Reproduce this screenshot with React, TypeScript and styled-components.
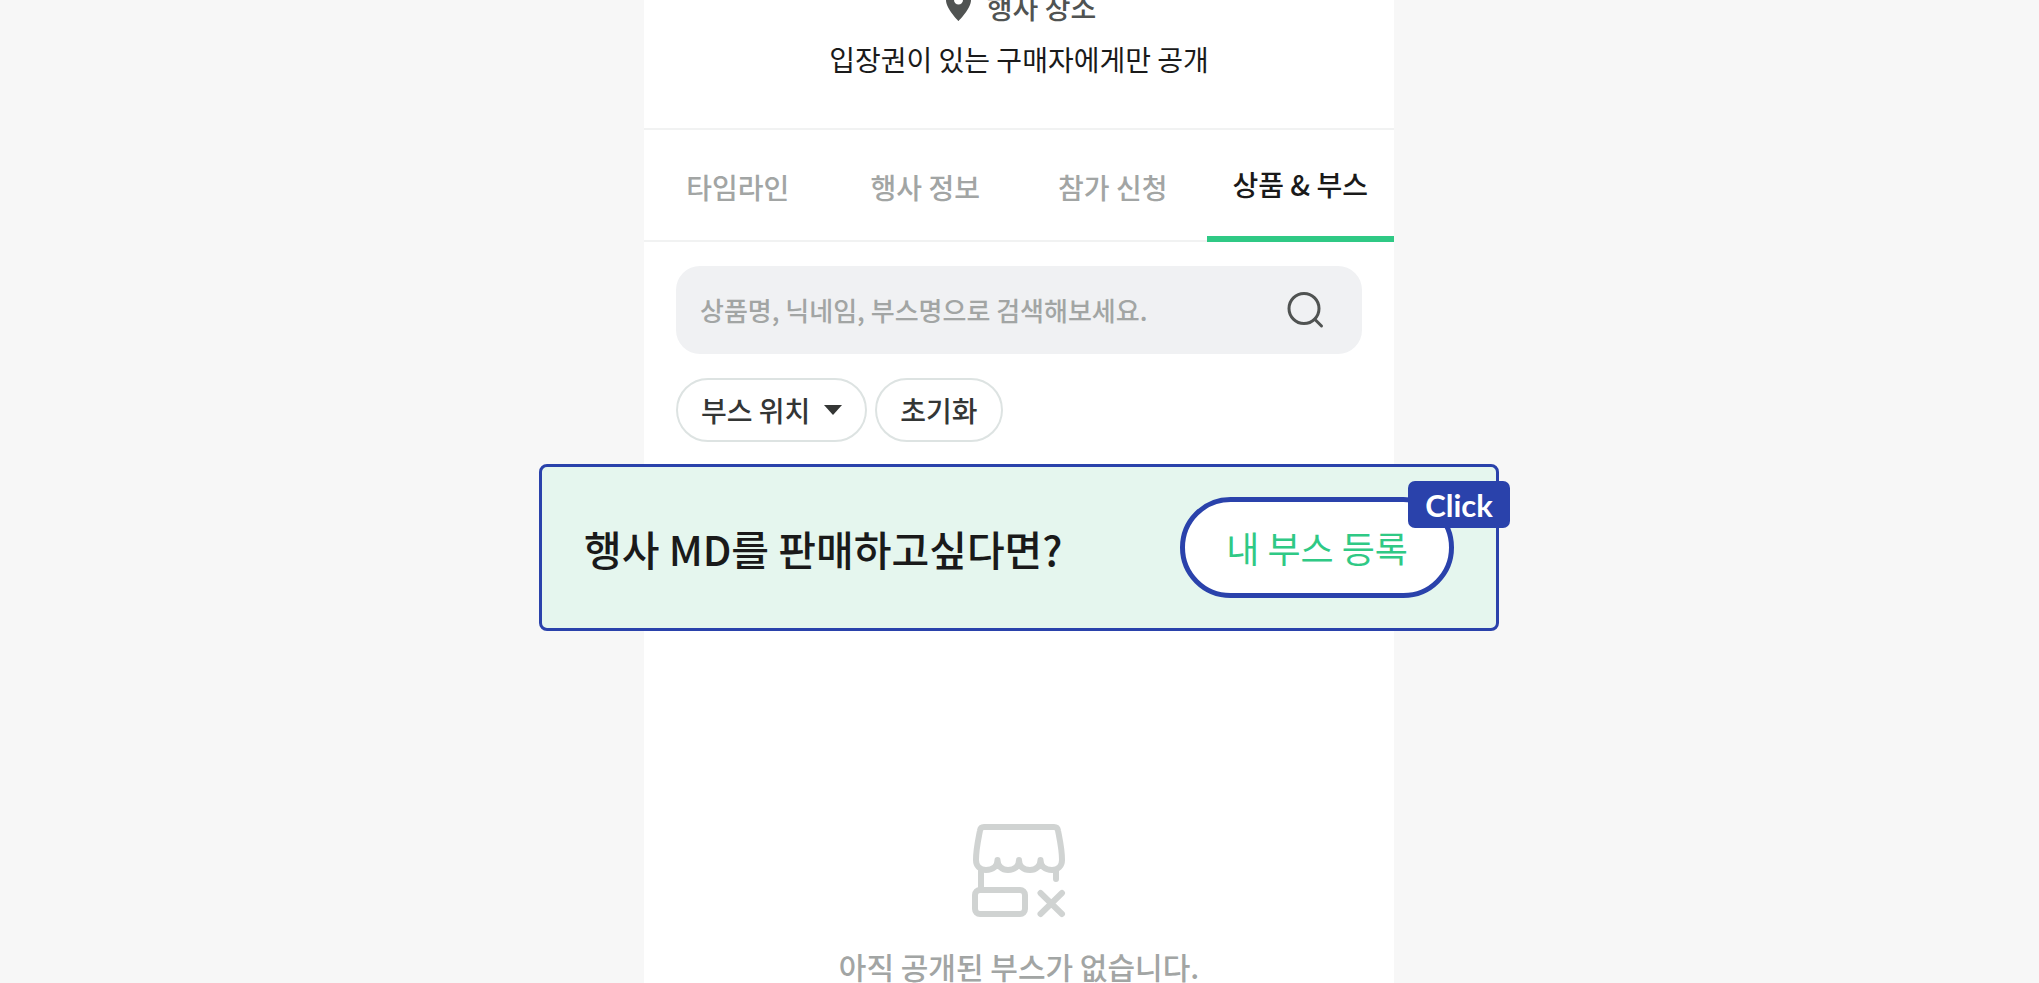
import React from "react";
import styled, { createGlobalStyle, css } from "styled-components";

const GlobalStyle = createGlobalStyle`
  *, *::before, *::after { box-sizing: border-box; }
  html { overflow: hidden; }
  body {
    margin: 0;
    background: #f7f7f7;
    color: #1a1a1a;
    font-family: "Noto Sans CJK KR", "Noto Sans", sans-serif;
  }
  button, input { font: inherit; }
  h1, h2, p { margin: 0; font-weight: inherit; }
`;

const Page = styled.div`
  height: 100vh;
  padding-right: 1px;
  overflow: hidden;
  display: flex;
  flex-direction: column;
  align-items: center;
`;

const Sheet = styled.main`
  flex: 1 0 auto;
  width: 100%;
  max-width: 750px;
  background: #fff;
  display: flex;
  flex-direction: column;
`;

const Venue = styled.header`
  height: 128px;
  padding-bottom: 49px;
  display: flex;
  flex-direction: column;
  align-items: center;
  justify-content: flex-end;
  gap: 12px;
`;

const VenueLabel = styled.h2`
  display: flex;
  align-items: center;
  gap: 16px;
  padding-left: 4px;
  color: #505352;
  font-size: 28px;
  font-weight: 500;
  line-height: 40px;
`;

const VenueNote = styled.p`
  font-size: 28px;
  line-height: 40px;
`;

const TabBar = styled.nav`
  display: grid;
  grid-template-columns: repeat(4, 1fr);
  height: 114px;
  border-top: 2px solid #f1f2f2;
  box-shadow: inset 0 -2px #f1f2f2;
`;

const Tab = styled.button<{ $active?: boolean }>`
  border: 0;
  padding: 2px 0 0;
  background: none;
  color: #a2a5a4;
  font-size: 28px;
  font-weight: 500;
  line-height: 40px;
  white-space: nowrap;
  ${({ $active }) =>
    $active &&
    css`
      color: #1a1a1a;
      border-bottom: 6px solid #2fc985;
    `}
`;

const Filters = styled.section`
  padding: 24px 32px 22px;
  display: flex;
  flex-direction: column;
  gap: 24px;
`;

const SearchBox = styled.form`
  display: flex;
  align-items: center;
  height: 88px;
  padding: 0 32px 0 24px;
  border-radius: 24px;
  background: #f0f1f3;
`;

const SearchInput = styled.input`
  flex: 1;
  min-width: 0;
  border: 0;
  padding: 0;
  outline: 0;
  background: none;
  font-size: 26px;
  font-weight: 500;
  line-height: 40px;
  &::placeholder { color: #a2a5a4; opacity: 1; }
`;

const IconButton = styled.button`
  display: flex;
  border: 0;
  padding: 0;
  background: none;
`;

const ChipRow = styled.div`
  display: flex;
  gap: 8px;
`;

const Chip = styled.button`
  display: flex;
  align-items: center;
  gap: 14px;
  height: 64px;
  padding: 0 23px;
  border: 2px solid #dde3e2;
  border-radius: 32px;
  background: #fff;
  color: #343635;
  font-size: 28px;
  font-weight: 500;
  line-height: 40px;
  white-space: nowrap;
`;

const Banner = styled.section`
  align-self: center;
  position: relative;
  flex: none;
  display: flex;
  align-items: center;
  justify-content: space-between;
  width: 960px;
  max-width: 100vw;
  height: 167px;
  padding: 0 42px;
  border: 3px solid #2a42ab;
  border-radius: 8px;
  background: #e5f6ee;
`;

const BannerTitle = styled.h1`
  font-size: 41px;
  font-weight: 500;
  line-height: 60px;
`;

const RegisterButton = styled.button`
  height: 101px;
  padding: 0 41px 2px;
  border: 5px solid #2a42ab;
  border-radius: 51px;
  background: #fff;
  color: #2fc985;
  font-size: 36px;
  line-height: 52px;
`;

const ClickBadge = styled.span`
  position: absolute;
  top: 14px;
  right: -14px;
  display: flex;
  align-items: center;
  justify-content: center;
  width: 102px;
  height: 47px;
  border-radius: 7px;
  background: #2a42ab;
  color: #fff;
  font-family: Lato, sans-serif;
  font-size: 31px;
  font-weight: 700;
  line-height: 40px;
`;

const EmptyState = styled.section`
  padding-top: 193px;
  display: flex;
  flex-direction: column;
  align-items: center;
  gap: 26px;
  color: #a2a5a4;
  font-size: 30px;
  font-weight: 500;
  line-height: 44px;
`;

const PinIcon = () => (
  <svg width="25" height="38" viewBox="0 0 25 38" aria-hidden="true">
    <path
      fill="#505352"
      fillRule="evenodd"
      d="M12.5 0C5.500 0 0 5.300 0 12.200C0 20.500 12.500 33 12.500 33S25 20.500 25 12.200C25 5.300 19.500 0 12.500 0ZM12.500 16.500A4.500 4.500 0 1 1 12.500 7.500A4.500 4.500 0 0 1 12.500 16.500Z"
    />
  </svg>
);

const SearchIcon = () => (
  <svg width="48" height="48" viewBox="0 0 48 48" fill="none" stroke="#505352" strokeWidth="3" strokeLinecap="round" aria-hidden="true">
    <circle cx="22" cy="22.500" r="15" />
    <path d="M33 33.500L39.500 40" />
  </svg>
);

const CaretIcon = () => (
  <svg width="18" height="10" viewBox="0 0 18 10" aria-hidden="true">
    <path fill="#343635" d="M0 0H18L9 10Z" />
  </svg>
);

const ClosedBoothIcon = () => (
  <svg width="94" height="94" viewBox="0 0 94 94" fill="none" stroke="#d0d3d2" strokeWidth="6" strokeLinecap="round" strokeLinejoin="round" aria-hidden="true">
    <path d="M12 3H82Q85.500 3 86 6.500C88 17 90 25 90 36C90 42 86 46 80 46C73 46 68.500 42 68.500 36C68.500 42 64 46 58 46C51 46 47 42 47 36C47 42 43 46 36 46C30 46 25.500 42 25.500 36C25.500 42 21 46 14 46C8 46 4 42 4 36C4 25 6 17 8 6.500Q8.500 3 12 3Z" />
    <path d="M9 46V65M84 46V55" />
    <rect x="3" y="66" width="50" height="24" rx="5" />
    <path d="M68.500 69L90 90M90 69L68.500 90" />
  </svg>
);

const tabs = ["타임라인", "행사 정보", "참가 신청", "상품 & 부스"];

export default function App() {
  return (
    <Page>
      <GlobalStyle />
      <Sheet>
        <Venue>
          <VenueLabel>
            <PinIcon />
            행사 장소
          </VenueLabel>
          <VenueNote>입장권이 있는 구매자에게만 공개</VenueNote>
        </Venue>
        <TabBar aria-label="행사 메뉴">
          {tabs.map((label, i) => (
            <Tab key={label} type="button" $active={i === 3} aria-current={i === 3 ? "page" : undefined}>
              {label}
            </Tab>
          ))}
        </TabBar>
        <Filters>
          <SearchBox role="search" onSubmit={(e) => e.preventDefault()}>
            <SearchInput type="text" aria-label="부스 검색" placeholder="상품명, 닉네임, 부스명으로 검색해보세요." />
            <IconButton type="submit" aria-label="검색">
              <SearchIcon />
            </IconButton>
          </SearchBox>
          <ChipRow>
            <Chip type="button" aria-haspopup="listbox">
              부스 위치
              <CaretIcon />
            </Chip>
            <Chip type="button">초기화</Chip>
          </ChipRow>
        </Filters>
        <Banner>
          <BannerTitle>행사 MD를 판매하고싶다면?</BannerTitle>
          <RegisterButton type="button">내 부스 등록</RegisterButton>
          <ClickBadge>Click</ClickBadge>
        </Banner>
        <EmptyState>
          <ClosedBoothIcon />
          <p>아직 공개된 부스가 없습니다.</p>
        </EmptyState>
      </Sheet>
    </Page>
  );
}
